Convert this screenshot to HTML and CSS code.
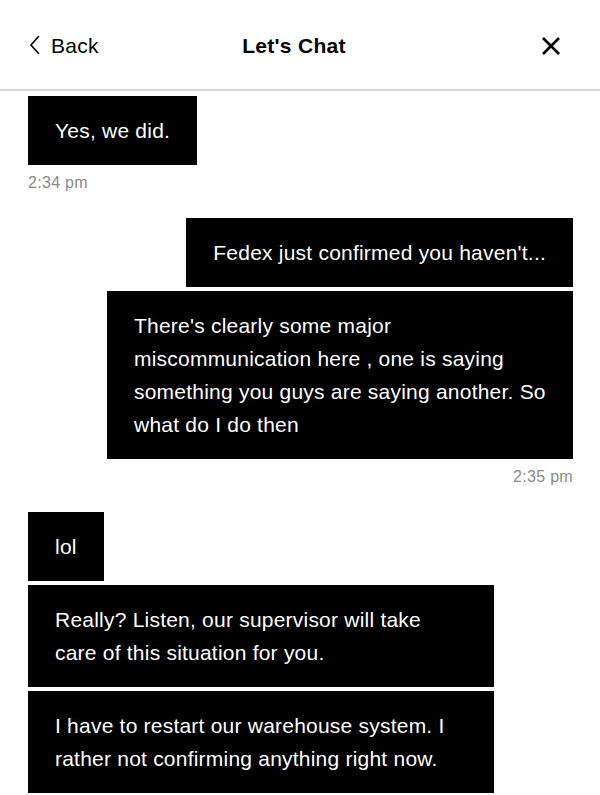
FILE: index.html
```html
<!DOCTYPE html>
<html lang="en">
<head>
    <meta charset="UTF-8">
    <meta name="viewport" content="width=device-width, initial-scale=1.0">
    <title>Let's Chat</title>
    <link rel="stylesheet" href="styles.css">
</head>
<body>
    <header class="topbar">
        <a class="back" href="#">
            <svg class="chevron" width="12" height="20" viewBox="0 0 12 20">
                <path d="M10 1 L2 10 L10 19" fill="none" stroke="#000" stroke-width="1.6"/>
            </svg>
            <span>Back</span>
        </a>
        <h1 class="title">Let's Chat</h1>
        <button class="close">
            <svg width="20" height="20" viewBox="0 0 20 20">
                <path d="M2 2 L18 18 M18 2 L2 18" stroke="#000" stroke-width="2.6"/>
            </svg>
        </button>
    </header>

    <main class="messages">
        <div class="group them">
            <div class="bubble">Yes, we did.</div>
            <div class="time">2:34 pm</div>
        </div>

        <div class="group me">
            <div class="bubble">Fedex just confirmed you haven't...</div>
            <div class="bubble">There's clearly some major miscommunication here , one is saying something you guys are saying another. So what do I do then</div>
            <div class="time">2:35 pm</div>
        </div>

        <div class="group them">
            <div class="bubble">lol</div>
            <div class="bubble">Really? Listen, our supervisor will take care of this situation for you.</div>
            <div class="bubble">I have to restart our warehouse system. I rather not confirming anything right now.</div>
        </div>
    </main>
</body>
</html>
```

FILE: styles.css
```css
* {
    margin: 0;
    padding: 0;
    box-sizing: border-box;
}

body {
    font-family: "Liberation Sans", Arial, sans-serif;
    background: #fff;
    color: #000;
    height: 795px;
    overflow: hidden;
}

.topbar {
    height: 91px;
    display: grid;
    grid-template-columns: 1fr auto 1fr;
    align-items: center;
    padding: 2px 39px 0 29px;
    border-bottom: 2px solid #d6d6d6;
}

.back {
    display: flex;
    align-items: center;
    gap: 10px;
    font-size: 21px;
    letter-spacing: 0.3px;
    color: #000;
    text-decoration: none;
}

.chevron {
    margin-top: -2px;
}

.title {
    font-size: 21px;
    font-weight: bold;
    letter-spacing: 0.3px;
    text-align: center;
    margin-right: 2px;
}

.close {
    justify-self: end;
    border: none;
    background: none;
    display: flex;
}

.messages {
    padding: 5px 27px 0 28px;
    display: flex;
    flex-direction: column;
}

.group {
    display: flex;
    flex-direction: column;
    gap: 4px;
    margin-bottom: 25px;
}

.group.them {
    align-items: flex-start;
}

.group.me {
    align-items: flex-end;
}

.bubble {
    background: #000;
    color: #fff;
    font-size: 21px;
    letter-spacing: 0.22px;
    line-height: 33px;
    padding: 18px 27px;
    max-width: 466px;
}

.time {
    font-size: 16px;
    letter-spacing: 0.3px;
    line-height: 20px;
    color: #8a8a8a;
    margin-top: 4px;
}
```
